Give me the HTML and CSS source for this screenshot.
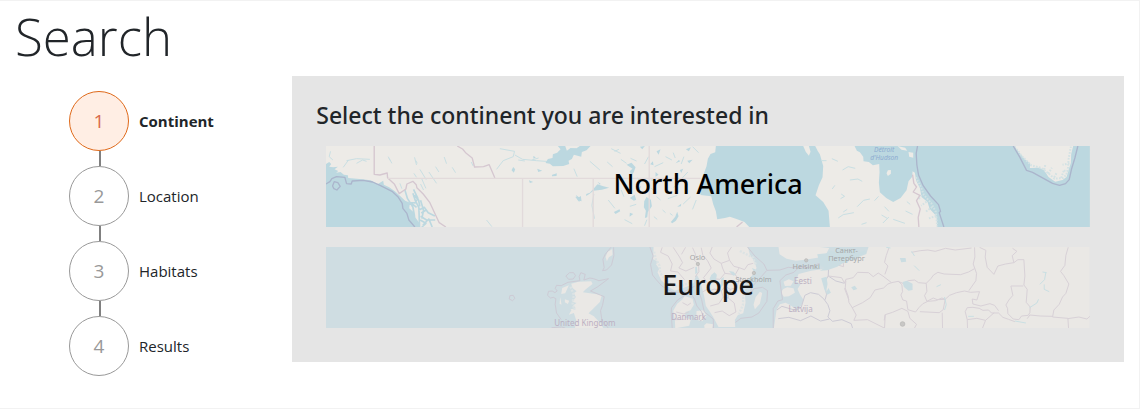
FILE: index.html
```html
<!DOCTYPE html>
<html lang="en">
<head>
    <meta charset="UTF-8">
    <meta name="viewport" content="width=device-width, initial-scale=1.0">
    <title>Search</title>
    <link rel="stylesheet" href="styles.css">
</head>
<body>
    <main class="page">
        <h1>Search</h1>
        <div class="wizard">
            <ol class="steps">
                <li class="step active" aria-current="step"><span class="circle">1</span><span class="label">Continent</span></li>
                <li class="step"><span class="circle">2</span><span class="label">Location</span></li>
                <li class="step"><span class="circle">3</span><span class="label">Habitats</span></li>
                <li class="step"><span class="circle">4</span><span class="label">Results</span></li>
            </ol>
            <section class="panel">
                <h2>Select the continent you are interested in</h2>
                <button type="button" class="continent north-america">
                    <svg class="map" viewBox="18 18 2292 243" preserveAspectRatio="xMidYMid slice" aria-hidden="true">
                        <!-- Pacific coast -->
                        <path class="sea" d="M18 72L28 66L34 72L28 80L40 82L54 80L44 88L55 93L49 98L62 96L72 104L84 106L85 114L120 117L152 121L174 132L190 122L192 134L208 142L225 154L240 167L256 182L270 188L268 205L283 218L287 233L298 248L300 261H18Z"/>
                        <path class="inlet" d="M255 150L263 176L279 201L284 229M266 185L285 189L294 175L281 148M299 261L297 203L286 181L279 160M296 211L313 202L325 218L345 228M302 229L320 240L346 240M309 255L327 237L337 261M302 181L311 211L306 236M318 211L304 219M260 194L275 190L290 202M301 240L318 250L306 261M283 166L296 180L300 199"/>
                        <path class="thin-water" d="M205 50L216 70M212 62L207 56M284 52L290 75M292 70L288 62M327 96L350 130M300 88L319 119M305 115L318 145M302 132L311 150M282 100L290 112M347 80L357 96M373 51L380 71M397 82L407 98M80 62L110 56L150 58M70 82L86 60M32 34L28 50L39 60M110 70L128 60L140 64M240 130L246 146M500 240L516 260M530 88L550 62L580 50L584 34L540 26M585 45L608 58L650 62L690 65M595 60L615 63M636 60L656 54M762 86L772 110M708 60L692 68M454 66L460 78"/>
                        <!-- prairie lakes -->
                        <path class="sea" d="M714 18L736 18L741 32L752 24L770 25L780 18L812 18L800 31L786 36L784 50L762 44L756 57L746 62L748 72L730 78L699 79L690 71L677 69L684 57L698 54L699 43L712 38L722 28ZM580 81L586 88L582 98L575 91ZM652 86L667 92L655 96ZM697 104L711 100L710 108L696 109ZM627 121L640 126L630 129ZM768 165L777 172L783 168L785 184L774 181ZM640 48L648 52L641 56ZM758 28L766 24L768 32Z"/>
                        <path class="sea" d="M799 162L810 158L825 142L833 133L848 138L868 143L846 149L821 152L808 162L799 168ZM766 170L782 174L778 186ZM840 134L833 125L842 131ZM920 74L935 68L947 82L942 96L934 108L930 93L938 86ZM973 184L980 171L993 179L996 199L984 216L982 232L975 234L978 212L972 202ZM1053 246L1066 230L1072 215L1076 229L1068 242L1057 250ZM952 112L965 122L959 132ZM1007 96L1016 104L1007 110ZM882 216L899 208L901 214L887 222ZM930 174L944 164L949 179L942 182ZM954 143L964 138L958 151ZM1010 34L1022 28L1016 44ZM1067 70L1077 60L1081 64ZM1102 62L1118 59L1108 70ZM991 73L999 64L1001 76ZM1072 200L1084 191L1083 199ZM1080 90L1090 86L1084 99ZM960 20L975 18L967 28ZM1098 28L1113 22L1107 34ZM930 218L940 222L929 230Z"/>
                        <path class="thin-water" d="M810 64L840 90M862 66L878 80M874 26L902 40M884 34L897 28M932 55L950 63M822 162L816 196L824 236M865 180L885 205M904 150L912 170M993 120L1018 125M994 145L1010 157M974 72L986 50M1004 80L1030 68M1037 50L1056 60M1060 38L1066 54M1084 72L1092 50M1087 114L1104 96M1061 142L1077 133M1090 192L1112 171M1118 208L1129 180M1044 176L1072 166M974 257L981 239M914 239L937 251M1118 20L1136 38M1010 170L1022 180M1028 210L1037 218M1002 230L1012 238M930 199L949 193M1050 220L1058 226M920 70L903 58"/>
                        <!-- Hudson Bay -->
                        <path class="sea" d="M1188 18H1450L1458 36L1467 47L1472 35L1467 18H1486L1494 34L1500 43L1510 78L1508 112L1497 136L1487 166L1510 186L1526 212L1530 261H1288L1274 246L1250 237L1230 230L1215 234L1192 238L1188 214L1180 193L1174 169L1142 165L1143 137L1151 103L1160 79L1164 56L1172 42L1186 37Z"/>
                        <!-- Hudson Strait -->
                        <path class="sea" d="M1604 18H2310V261H1852L1850 229L1829 206L1823 186L1805 171L1800 144L1789 122L1785 98L1778 94L1777 110L1766 124L1760 151L1742 174L1720 186L1699 174L1680 157L1677 128L1679 97L1678 72L1659 76L1647 66L1631 64L1630 50L1620 37L1611 32Z"/>
                        <path class="land" d="M1704 91L1713 90L1713 101L1704 108L1700 100ZM1733 18L1756 23L1762 32L1745 29ZM1766 36L1780 38L1780 53L1768 50ZM2083 18H2260L2254 42L2253 69L2246 90L2240 111L2228 120L2206 125L2186 111L2172 90L2157 83L2130 84L2131 70L2114 57L2099 39Z"/>
                        <path class="fringe" d="M2084 20L2106 48L2134 76L2165 84L2189 103L2204 116L2229 114L2239 105L2244 87L2246 58L2253 20M2203 112L2211 97M2224 114L2232 91M2185 101L2196 83M2249 70L2228 74M2246 93L2228 92M2173 89L2177 71"/>
                        <path class="fringe" d="M1788 112L1803 141L1812 165L1834 189L1848 216L1852 259M1805 165L1796 178M1820 185L1804 197M1837 201L1818 215M1849 228L1824 236"/>
                        <path class="thin-water" d="M1506 62L1520 62M1536 56L1554 64M1568 90L1585 80L1606 85M1590 120L1614 117L1627 124M1537 147L1545 136M1562 176L1574 169L1564 162M1555 234L1570 224L1602 218M1612 200L1631 181L1650 177M1664 182L1676 169M1689 249L1707 231M1685 225L1702 235M1720 238L1755 250M1757 213L1778 223M1625 253L1640 248M1694 200L1707 214M1582 208L1570 216M1761 185L1771 193"/>
                        <!-- borders -->
                        <path class="border" d="M163 18V103L180 105L202 99L203 113L224 133L238 161L258 147L261 132L279 124L289 134L291 143L310 162L330 188L344 218L358 248L378 261M412 18L428 27L439 40L457 54L464 81L491 80L508 74L516 93L525 114M1778 104L1782 130L1790 141L1780 156L1800 166L1790 182L1801 207L1795 232L1797 261M1250 261L1268 246"/>
                        <path class="border faint" d="M203 115H1142M608 115V261M820 116V261M988 18V261"/>
                        <path class="maritime" d="M18 132L30 125L36 116L50 110L75 112L80 131L94 132L97 123L130 121L158 126L182 137L218 155L234 170L247 190L249 205L261 220L267 240L285 261M43 125L54 128L61 139L51 150L42 146L38 138ZM1793 18L1789 40L1791 75L1796 105L1810 137L1832 168L1856 194L1862 214L1858 218L1872 261M2080 18L2100 52L2120 91L2138 97L2198 130L2219 136L2237 131L2248 119L2255 87L2265 54L2274 18"/>
                        <g class="water-names">
                            <text x="1693" y="36">Détroit</text>
                            <text x="1693" y="59">d'Hudson</text>
                        </g>
                    </svg>
                    <span class="name">North America</span>
                </button>
                <button type="button" class="continent europe">
                    <svg class="map" viewBox="18 21 2292 243" preserveAspectRatio="xMidYMid slice" aria-hidden="true">
                        <rect class="sea" x="18" y="21" width="2292" height="243"/>
                        <!-- Britain -->
                        <path class="land" d="M754 131L776 125L814 124L818 132L796 149L789 157L810 160L846 165L840 186L819 207L806 220L822 229L842 250L850 264H765L770 244L762 219L752 208L768 205L760 196L770 189L757 185L768 171L762 160L770 154L758 144ZM727 144L747 136L736 160L724 162ZM721 171L725 194L719 191ZM735 178L748 182L744 192L735 187ZM863 36L877 27L878 45L867 52L861 64L857 51ZM755 210L764 218L747 224Z"/>
                        <path class="border" d="M724 239L710 219L706 193L708 176L700 172L692 174L683 166L686 154L697 153L705 158L712 153L706 145L710 136L724 137L744 127L780 122L778 109L783 98L796 103L792 120L810 114L821 116L837 122L857 118L866 116L834 140L812 153L853 170L848 196L842 212L846 240L865 264M749 98L761 98L767 107L760 117L746 118L738 108ZM570 167L580 166L585 175L578 182L568 177ZM873 22L856 43L849 58L853 83L848 92L860 90L875 75L882 47L881 22M695 263L725 261L736 264"/>
                        <!-- Scandinavia -->
                        <path class="land" d="M1001 21H1284L1290 44L1303 63L1310 83L1304 99L1286 117L1273 137L1275 159L1277 188L1270 220L1254 225L1245 240L1246 261H1196L1182 235L1172 218L1158 198L1153 169L1147 146L1139 119L1129 101L1122 128L1108 137L1084 146L1065 152L1043 139L1024 121L1013 97L1018 86L1008 72L1018 66L1000 58Z"/>
                        <path class="land" d="M1095 168L1118 176L1122 194L1112 211L1097 216L1095 233L1113 238L1108 257L1072 264H1066L1065 240L1060 212L1072 191L1088 178ZM1130 213L1151 211L1160 229L1147 244L1129 239ZM1307 172L1320 155L1327 159L1320 191L1305 208L1301 194ZM1153 256L1160 250L1180 253L1177 264H1154Z"/>
                        <path class="border" d="M990 21L1000 48L992 73L998 105L1009 119L1026 138L1057 156L1087 158L1124 139M1138 139L1135 150L1145 178L1153 215L1180 237L1181 264M1057 264L1054 221L1055 203L1073 180L1096 165L1113 161L1124 177L1131 198L1145 215L1152 236L1140 243M1283 21L1305 48L1332 72L1341 91L1380 90L1405 82L1430 84L1450 79L1460 86M1340 92L1324 110L1296 141L1289 165L1302 146L1328 142L1343 152L1341 184L1317 219L1296 231L1263 235L1247 247"/>
                        <path class="border thin" d="M1027 22L1022 37L1045 48L1057 72L1052 93L1074 96L1094 119M1060 22L1079 51L1088 68L1077 84L1098 93L1123 82M1097 22L1085 43M1118 23L1127 43L1123 60L1136 73L1137 95L1126 111M1144 23L1149 46L1163 62L1174 84L1162 99L1151 113L1166 132L1163 147L1148 156M1177 21L1170 39L1182 57L1204 70L1229 61L1223 39L1235 21M1229 61L1242 79L1258 83L1246 104L1258 119L1251 143L1231 148L1216 139L1204 153L1183 147L1166 154M1204 153L1210 171L1197 191L1171 198M1231 148L1225 174L1243 189L1248 216L1228 227L1207 213L1184 218M1210 171L1225 174M1258 83L1274 89L1284 74L1300 70M1246 104L1215 100L1200 118L1180 116L1168 130M1215 100L1208 84L1204 70M1088 188L1103 196L1113 189M1069 216L1092 222L1107 216M1066 239L1095 238"/>
                        <path class="lake" d="M1174 105L1184 97L1191 104L1188 122L1177 126L1169 117ZM1204 116L1212 111L1210 135L1202 143ZM1126 81L1131 80L1133 98L1126 103ZM1227 93L1241 95L1248 104L1240 107ZM1296 84L1309 89L1303 97Z"/>
                        <path class="shore" d="M1003 35L1008 59L1019 77L1021 99L1040 122L1061 139L1083 138L1113 127M1280 132L1271 160L1269 196L1257 221M1260 33L1300 53L1308 75M752 140L762 165L758 190L764 210"/>
                        <!-- Finland, Baltics and Russia -->
                        <path class="land" d="M1376 21H1500L1528 24L1520 40L1506 51L1456 59L1428 62L1400 56L1379 43ZM1436 102L1474 92L1510 87L1540 81L1560 70L1586 62L1610 47L1640 40L1646 21H2310V264H1362L1370 210L1380 193L1397 188L1412 196L1430 209L1444 197L1451 180L1440 163L1433 147L1442 133L1428 124ZM1391 125L1407 118L1421 124L1413 137L1395 138ZM1390 147L1402 142L1421 145L1425 158L1407 169L1392 170L1383 158Z"/>
                        <path class="border" d="M1360 264V206L1374 183L1388 179L1384 153L1380 122L1398 105L1422 97L1438 81L1470 82L1494 72L1534 60L1552 47M1371 210L1386 199L1427 211L1444 202L1455 166L1472 158L1496 163L1512 177L1524 194L1530 212L1524 231L1538 244L1566 239L1594 251L1598 264M1375 236L1407 232L1442 242L1473 228L1502 243L1529 237M1516 179L1520 163L1513 128L1525 108L1526 89M1525 108L1548 123L1574 130"/>
                        <path class="border thin" d="M1526 89L1540 71L1571 80L1570 62L1609 51M1526 108L1565 113L1574 129L1578 118L1600 113L1613 97L1646 98L1660 110L1675 99L1689 108L1715 128L1704 132L1691 144L1665 150L1651 173L1628 188L1597 203L1587 187L1585 169L1576 144L1578 122M1715 128L1735 124L1746 134L1748 155L1743 165L1749 180L1760 183L1764 209L1787 216L1797 203L1809 191L1824 184L1847 182L1866 174L1876 178L1870 209L1858 218L1800 215M1597 203L1609 225L1602 241M1693 241L1696 224L1718 217L1746 205L1764 214L1770 235L1790 253L1784 264M1695 103L1704 78L1694 67L1699 47L1707 24M1775 37L1801 32L1824 30L1846 34L1877 25L1906 30L1955 24M1735 124L1751 131L1765 122L1784 120L1796 128L1819 130L1833 116L1841 105L1854 97L1873 102L1922 104L1946 96L1964 86M1819 130L1821 154L1814 167L1821 184L1840 174L1852 179L1876 178L1889 166L1910 158L1934 153L1952 157L1979 155L1971 180L1957 177L1959 192L1983 198L2010 191L2024 196L2036 212M1964 22L1965 51L1960 72L1970 100L1968 122L1947 152M1979 22L1998 31L1996 51L2002 82L2022 103L2034 78L2057 72L2082 68L2077 47L2091 34L2078 25M2082 68L2094 59H2112L2115 108L2112 135L2122 148L2119 187L2131 201L2130 218L2125 226L2105 228L2097 239L2080 237L2064 221L2063 205L2058 195L2067 180L2079 166L2073 138H2110M2245 22L2238 46L2235 76L2222 94L2232 107L2247 132L2238 160L2228 171L2218 193L2202 210L2198 231L2244 235L2246 264M2122 236L2130 225L2161 228L2198 229M1936 215L1942 203L1959 202L1978 205L1989 211L2006 210L2015 219L2036 219L2049 232L2066 238L2085 245M1936 215L1942 239L1971 235L1997 241L1988 264M1867 218L1868 264M1997 241L2023 218M2243 236L2277 231L2301 237L2310 229M1602 241L1643 239L1693 264M1574 145L1587 180M1696 224L1694 264M1942 239L1943 264"/>
                        <path class="lake" d="M1492 43L1520 40L1532 32L1552 36L1560 25L1580 31L1602 26L1612 39L1636 31L1640 42L1618 50L1602 62L1587 60L1584 68L1570 69L1552 80L1522 91L1500 92L1514 84L1500 75ZM1504 115L1520 110L1523 132L1518 158L1526 144L1533 158L1522 164L1514 150ZM1740 54L1757 54L1759 65L1744 67ZM1748 126L1761 122L1778 131L1778 150L1766 152L1752 141ZM1594 142L1605 137L1612 147L1601 151Z"/>
                        <path class="thin-water" d="M1775 34L1784 48M1783 77L1798 92M2168 96L2180 98M2178 97L2174 119L2160 133M2173 133L2173 148L2188 155M2156 178L2151 189L2129 203M1874 171L1879 194L1874 210M1945 229L1962 229M2085 243L2118 249M1699 22L1712 24M1850 140L1863 134"/>
                        <g class="cities">
                            <circle cx="1134" cy="72" r="5"/>
                            <circle cx="1302" cy="99" r="5"/>
                            <circle cx="1459" cy="61" r="5"/>
                            <circle cx="1748" cy="252" r="7"/>
                        </g>
                        <g class="place-names">
                            <text x="1133" y="60">Oslo</text>
                            <text x="1301" y="127">Stockholm</text>
                            <text x="1459" y="87">Helsinki</text>
                            <text x="1580" y="38">Санкт-</text>
                            <text x="1580" y="63">Петербург</text>
                        </g>
                        <g class="country-names">
                            <text x="795" y="258">United Kingdom</text>
                            <text x="1106" y="239">Danmark</text>
                            <text x="1449" y="131">Eesti</text>
                            <text x="1442" y="215">Latvija</text>
                        </g>
                    </svg>
                    <span class="name">Europe</span>
                </button>
            </section>
        </div>
    </main>
</body>
</html>
```
FILE: styles.css
```css
* {
    box-sizing: border-box;
}

body {
    margin: 0;
    background: #fff;
    color: #212529;
    font-family: "Segoe UI", "Open Sans", "Noto Sans", sans-serif;
    font-size: 15px;
}

.page {
    min-height: 100vh;
    padding: 0 15px 32px;
    border: solid #f2f2f2;
    border-width: 1px 1px 1px 0;
}

h1 {
    margin: 0 0 5px;
    font-size: 51px;
    font-weight: 300;
    line-height: 70px;
}

.wizard {
    display: grid;
    grid-template-columns: 1fr 3fr;
    align-items: start;
}

.steps {
    display: flex;
    flex-direction: column;
    gap: 15px;
    margin: 0;
    padding: 15px 0 0 54px;
    list-style: none;
}

.step {
    position: relative;
    display: flex;
    align-items: center;
    gap: 10px;
}

/* line to the next step */
.step:not(:last-child)::after {
    content: "";
    position: absolute;
    top: 60px;
    left: 30px;
    width: 2px;
    height: 15px;
    background: #808080;
}

.circle {
    display: flex;
    align-items: center;
    justify-content: center;
    width: 60px;
    height: 60px;
    border: 1px solid #999;
    border-radius: 50%;
    color: #999;
    font-size: 19px;
}

.active .circle {
    background: #ffeee4;
    border-color: #df6919;
    color: #d9694a;
}

.active .label {
    font-weight: 700;
}

.panel {
    padding: 24px;
    background: #e5e5e5;
}

h2 {
    margin: 0 0 16px;
    font-family: "Segoe UI", "Noto Sans", sans-serif;
    font-size: 23px;
    font-weight: 500;
    line-height: 30px;
}

.continent {
    position: relative;
    display: flex;
    align-items: center;
    justify-content: center;
    width: calc(100% - 20px);
    height: 81px;
    margin: 0 10px 20px;
    padding: 0 0 6px;
    border: 0;
    background: #edebe7;
    color: #000;
    font-family: "Segoe UI", "Noto Sans", sans-serif;
    font-size: 27px;
    font-weight: 500;
    cursor: pointer;
    overflow: hidden;
}

.continent:last-child {
    margin-bottom: 10px;
}

.europe {
    color: #171717;
}

.name {
    position: relative;
}

.map {
    position: absolute;
    inset: 0;
    width: 100%;
    height: 100%;
    fill: none;
    stroke-linejoin: round;
}

.map .land {
    fill: #edebe7;
}

.map .sea,
.map .lake {
    fill: #bcd8e0;
}

.map .inlet {
    stroke: #bcd8e0;
    stroke-width: 5;
}

.map .thin-water {
    stroke: #c9dfe3;
    stroke-width: 3;
}

.map .fringe {
    stroke: #d3e2e4;
    stroke-width: 6;
    stroke-dasharray: 5 4;
}

.map .border {
    stroke: #d5c7d0;
    stroke-width: 4;
}

.map .faint {
    stroke: #e2dadb;
}

.map .maritime {
    stroke: #abb5cc;
    stroke-width: 4;
}

.europe .land {
    fill: #eae8e5;
}

.europe .sea {
    fill: #cfdde2;
}

.europe .lake {
    fill: #cbdde2;
}

.europe .shore {
    stroke: #dce3e4;
    stroke-width: 7;
    stroke-dasharray: 6 4;
}

.europe .border {
    stroke: #cdcbd5;
    stroke-width: 3;
}

.europe .thin {
    stroke: #d8d1d7;
}

.map text {
    stroke: none;
    font-family: "Noto Sans", sans-serif;
    font-weight: 400;
    text-anchor: middle;
}

.water-names {
    fill: #8eacd0;
    font-size: 20px;
    font-style: italic;
}

.cities {
    fill: #c8c7c5;
    stroke: #b5b5b4;
    stroke-width: 2;
}

.place-names {
    fill: #a4a6a7;
    font-size: 22px;
}

.country-names {
    fill: #bcb0c2;
    font-size: 24px;
}
```
